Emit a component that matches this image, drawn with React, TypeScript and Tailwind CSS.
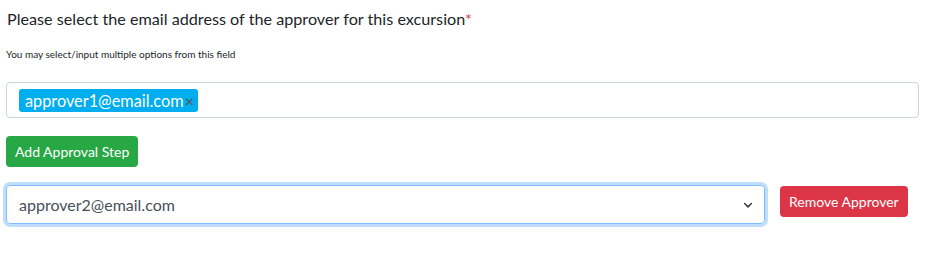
import React from "react";

export default function App() {
  const font = { fontFamily: 'Lato, "Noto Sans", sans-serif' };
  return (
    <div className="w-[933px] h-[258px] bg-white pl-[6px] pr-[14px] pt-[7px]" style={font}>
      <div className="text-[16.2px] leading-[24px] text-[#212529] pl-[1px]">
        Please select the email address of the approver for this excursion
        <span className="text-[#dc3545]">*</span>
      </div>
      <div className="mt-[17px] text-[10px] leading-[13px] text-[#212529]">
        You may select/input multiple options from this field
      </div>
      <div className="mt-[21px] h-[36px] border border-[#ced4da] rounded-[4px] flex items-center px-[12px]">
        <span className="h-[23px] bg-[#00adef] rounded-[3px] flex items-center pl-[6px] pr-[4px] text-white text-[16.3px] leading-[23px]">
          approver1@email.com
          <span className="text-[#555] text-[16px] ml-[1px]">×</span>
        </span>
      </div>
      <button className="mt-[18px] h-[31px] px-[9px] bg-[#28a745] rounded-[4px] text-white text-[14px] leading-[20px]">
        Add Approval Step
      </button>
      <div className="mt-[18px] flex items-start gap-[15px]">
        <div className="w-[759px] h-[39px] border border-[#80bdff] rounded-[4px] shadow-[0_0_0_3px_rgba(0,123,255,0.25)] flex items-center justify-between pl-[12px] pr-[10px]">
          <span className="text-[16px] text-[#495057]">approver2@email.com</span>
          <svg width="12" height="12" viewBox="0 0 16 16">
            <path d="M3.5 6 L8 10.5 L12.5 6" stroke="#343a40" strokeWidth="2" fill="none" strokeLinecap="round" strokeLinejoin="round" />
          </svg>
        </div>
        <button className="mt-[1px] h-[31px] px-[9px] bg-[#dc3545] rounded-[4px] text-white text-[14px] leading-[20px]">
          Remove Approver
        </button>
      </div>
    </div>
  );
}
